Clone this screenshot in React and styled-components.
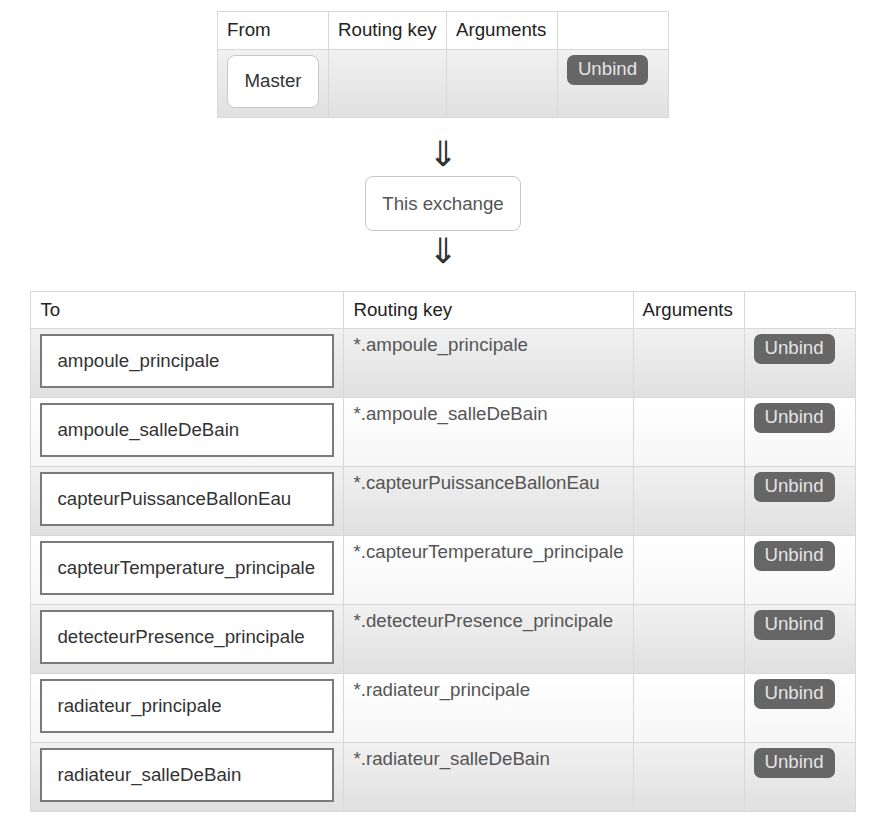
import styled, { createGlobalStyle } from "styled-components";

const GlobalStyle = createGlobalStyle`
  html, body {
    margin: 0;
    padding: 0;
    background: #fff;
  }
  body {
    font-family: "Liberation Sans", Arial, sans-serif;
    font-size: 18.7px;
    color: #333;
  }
`;

const Page = styled.div`
  display: flex;
  flex-direction: column;
  align-items: center;
  padding-top: 11px;
`;

const Table = styled.table`
  border-collapse: collapse;
  table-layout: fixed;
  border: 1px solid #d4d4d4;
`;

const Th = styled.th`
  text-align: left;
  font-weight: normal;
  color: #222;
  background: #fff;
  border: 1px solid #d8d8d8;
  padding: ${(p) => (p.$tall ? "7px 9px 9px" : "7px 9px 8px")};
  line-height: 21px;
  height: ${(p) => (p.$tall ? "21px" : "20px")};
`;

const Tr = styled.tr`
  background: ${(p) =>
    p.$alt
      ? "linear-gradient(#ffffff, #f6f6f6)"
      : "linear-gradient(#f1f1f1, #e0e0e0)"};
`;

const Td = styled.td`
  border: 1px solid #d8d8d8;
  vertical-align: top;
  padding: 5px 9px 8px;
  height: ${(p) => (p.$short ? "54px" : "55px")};
  color: #555;
  line-height: 20px;
`;

const KeyText = styled.div`
  padding-top: 1px;
  white-space: nowrap;
`;

const NameBox = styled.div`
  box-sizing: border-box;
  height: 54px;
  display: flex;
  align-items: center;
  background: #fff;
  color: #333;
  white-space: nowrap;
  ${(p) =>
    p.$round
      ? `
    justify-content: center;
    border: 1px solid #c8c8c8;
    border-radius: 8px;
    height: 53px;
    padding-bottom: 2px;
  `
      : `
    border: 2px solid #7a7a7a;
    padding-left: 15px;
    padding-bottom: 1px;
  `}
`;

const Button = styled.button`
  font-family: inherit;
  font-size: 18.7px;
  line-height: 20px;
  width: 81px;
  height: 30px;
  border: none;
  border-radius: 7px;
  background: #666;
  color: #e4e4e4;
  padding: 0 0 3px;
  cursor: pointer;
`;

const Arrow = styled.div`
  font-family: "DejaVu Sans", sans-serif;
  font-size: 35px;
  line-height: 34px;
  color: #333;
  margin: ${(p) => p.$m};
`;

const Exchange = styled.div`
  box-sizing: border-box;
  width: 156px;
  height: 55px;
  display: flex;
  align-items: center;
  justify-content: center;
  border: 1px solid #c8c8c8;
  border-radius: 8px;
  color: #555;
`;

const bindings = [
  "ampoule_principale",
  "ampoule_salleDeBain",
  "capteurPuissanceBallonEau",
  "capteurTemperature_principale",
  "detecteurPresence_principale",
  "radiateur_principale",
  "radiateur_salleDeBain",
];

export default function App() {
  return (
    <>
      <GlobalStyle />
      <Page>
        <Table>
          <colgroup>
            <col style={{ width: 111 }} />
            <col style={{ width: 118 }} />
            <col style={{ width: 111 }} />
            <col style={{ width: 111 }} />
          </colgroup>
          <thead>
            <tr>
              <Th $tall>From</Th>
              <Th $tall>Routing key</Th>
              <Th $tall>Arguments</Th>
              <Th $tall />
            </tr>
          </thead>
          <tbody>
            <Tr>
              <Td $short>
                <NameBox $round>Master</NameBox>
              </Td>
              <Td $short />
              <Td $short />
              <Td $short>
                <Button>Unbind</Button>
              </Td>
            </Tr>
          </tbody>
        </Table>

        <Arrow $m="19px 0 5px">⇓</Arrow>
        <Exchange>This exchange</Exchange>
        <Arrow $m="3px 0 23px">⇓</Arrow>

        <Table>
          <colgroup>
            <col style={{ width: 313 }} />
            <col style={{ width: 288 }} />
            <col style={{ width: 111 }} />
            <col style={{ width: 111 }} />
          </colgroup>
          <thead>
            <tr>
              <Th>To</Th>
              <Th>Routing key</Th>
              <Th>Arguments</Th>
              <Th />
            </tr>
          </thead>
          <tbody>
            {bindings.map((name, i) => (
              <Tr key={name} $alt={i % 2 === 1}>
                <Td>
                  <NameBox>{name}</NameBox>
                </Td>
                <Td>
                  <KeyText>*.{name}</KeyText>
                </Td>
                <Td />
                <Td>
                  <Button>Unbind</Button>
                </Td>
              </Tr>
            ))}
          </tbody>
        </Table>
      </Page>
    </>
  );
}
